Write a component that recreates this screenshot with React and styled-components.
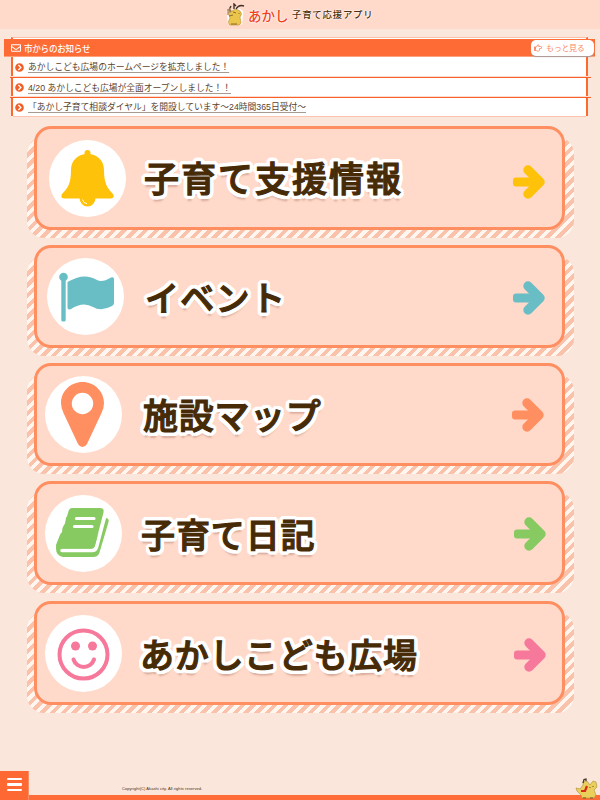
import styled, { createGlobalStyle } from "styled-components";
import { FaChevronCircleRight, FaRegEnvelope, FaRegHandPointRight } from "react-icons/fa";

const GlobalStyle = createGlobalStyle`
  * {
    box-sizing: border-box;
  }
  body {
    margin: 0;
    background: #fbe6dc;
    color: #4d2f0c;
    font-family: "Liberation Sans", "Noto Sans CJK JP", sans-serif;
  }
`;

const Page = styled.div`
  height: 800px;
  display: flex;
  flex-direction: column;
  overflow: hidden;
`;

const Header = styled.header`
  height: 29px;
  flex: none;
  padding-left: 226px;
  display: flex;
  align-items: center;
  background: #ffd9c9;
`;
const Logo = styled.h1`
  margin: 0 0 0 2px;
  display: flex;
  align-items: center;
  white-space: nowrap;
  font-family: "Noto Sans CJK JP", sans-serif;
  text-shadow: 0 0 2px #fff, 0 0 2px #fff, 0 0 1px #fff;
`;
const City = styled.span`
  width: 44px;
  color: #f0411c;
  font-size: 13.5px;
  font-weight: 500;
  line-height: 28px;
`;
const AppName = styled.span`
  font-size: 9.4px;
  font-weight: 500;
  letter-spacing: 0.8px;
  line-height: 29px;
`;

const News = styled.section`
  flex: none;
  margin: 8px 12px 0 11px;
  height: 79px;
  border-top: 1px solid #fcbda6;
  border-left: 2px solid #fb6a2c;
  border-right: 2px solid #fb6a2c;
  background: #fff;
`;
const NewsHead = styled.div`
  height: 18px;
  margin: 1px -9px 0;
  padding: 0 1px 0 7px;
  display: flex;
  align-items: center;
  background: #fe6b35;
  border-bottom: 1px solid #fda07c;
  color: #fff;
`;
const NewsTitle = styled.h2`
  margin: 0 auto 0 3px;
  font-family: "Noto Sans CJK JP", sans-serif;
  font-size: 8.6px;
  font-weight: 500;
  letter-spacing: -0.3px;
`;
const More = styled.a`
  width: 63px;
  height: 16px;
  padding-left: 3px;
  display: flex;
  align-items: center;
  gap: 4px;
  border-radius: 5px;
  background: #fff;
  box-shadow: 0 1px 1px #a99;
  color: #fb8a68;
  font-size: 8px;
  letter-spacing: -0.3px;
`;
const NewsList = styled.ul`
  margin: 0;
  padding: 0;
  list-style: none;
`;
const NewsItem = styled.li`
  height: 20px;
  margin: 0 -5px 0 -3px;
  padding: 0 5px 1px 5px;
  display: flex;
  align-items: center;
  gap: 4px;
  background: linear-gradient(#fddcd0 50%, #fb5f28 50%) bottom / 100% 2px no-repeat;
  &:first-child {
    height: 21px;
  }
  &:last-child {
    height: 19px;
    margin: 0;
    padding-left: 2px;
    background: linear-gradient(#fcc3b0, #fcc3b0) bottom / 100% 1px no-repeat;
  }
`;
const NewsLink = styled.a`
  font-size: 8.8px;
  line-height: 12px;
  letter-spacing: -0.03px;
  color: #59432f;
  white-space: nowrap;
  text-decoration: underline;
  text-decoration-color: #a79b91;
  text-underline-offset: 1.5px;
`;

const Menu = styled.nav`
  flex: 1;
  padding: 10px 26px 0 27px;
  display: flex;
  flex-direction: column;
`;
/* striped plate, its top edge sits 11px below the card's top */
const CardShade = styled.div`
  flex: none;
  display: flex;
  flex-direction: column;
  margin: 11px 0 ${(p) => p.$after}px;
  padding: 0 9px 8px 7px;
  background: repeating-linear-gradient(135deg, #fff6ef 0 3.6px, #fbc2ab 3.6px 7.6px);
  border-radius: 17px;
`;
const Card = styled.a`
  height: ${(p) => p.$height}px;
  margin-top: -11px;
  padding: 0 16px 0 ${(p) => p.$left}px;
  display: flex;
  align-items: center;
  border: 3px solid #ff8e60;
  border-radius: 17px;
  background: #ffd9c9;
`;
const Circle = styled.div`
  width: 77px;
  height: 77px;
  flex: none;
  border-radius: 50%;
  background: #fff;
  svg {
    display: block;
  }
`;
const CardLabel = styled.span`
  flex: 1;
  margin: ${(p) => p.$drop}px 0 0 ${(p) => p.$gap}px;
  font-family: "Noto Sans CJK JP", sans-serif;
  font-size: ${(p) => p.$size}px;
  font-weight: 500;
  line-height: 50px;
  white-space: nowrap;
  letter-spacing: ${(p) => p.$spacing}px;
  color: #472b07;
  -webkit-text-stroke: 1.2px #472b07;
  text-shadow: 4px 0 #fff, -4px 0 #fff, 0 4px #fff, 0 -4px #fff, 3px 3px #fff,
    -3px 3px #fff, 3px -3px #fff, -3px -3px #fff, 4px 2px #fff, -4px 2px #fff,
    4px -2px #fff, -4px -2px #fff, 2px 4px #fff, -2px 4px #fff, 2px -4px #fff,
    -2px -4px #fff, 2px 0 #fff, -2px 0 #fff, 0 2px #fff, 0 -2px #fff,
    0 5.5px 2px #d7aa9a;
`;
const ArrowSvg = styled.svg`
  flex: none;
  margin-top: ${(p) => p.$drop}px;
  margin-right: ${(p) => p.$right}px;
`;

const Footer = styled.footer`
  height: 29px;
  flex: none;
  display: flex;
  align-items: flex-end;
  background: linear-gradient(#ff6c37, #ff6c37) bottom / 100% 5px no-repeat;
`;
const MenuButton = styled.button`
  width: 29px;
  height: 29px;
  padding: 0 0 2px;
  border: 0;
  border-right: 1px solid #fd8d64;
  display: flex;
  flex-direction: column;
  align-items: center;
  justify-content: center;
  gap: 3px;
  background: #fe6832;
`;
const MenuLine = styled.span`
  width: 15px;
  height: 2.4px;
  border-radius: 1px;
  background: #fff;
`;
const Copyright = styled.small`
  margin: 0 auto 8px 93px;
  font-size: 4px;
  line-height: 6px;
  letter-spacing: 0.06px;
  white-space: nowrap;
`;

const Bell = () => (
  <svg width="77" height="77" viewBox="0 0 77 77" fill="#ffc20a">
    <rect x="35.5" y="10" width="6" height="9" rx="3" />
    <path d="M38.5 14C28 14 22 21 22 30C22 43 19 48 13 54Q11 58 15 58.5H62Q66 58 64 54C58 48 55 43 55 30C55 21 49 14 38.5 14Z" />
    <path d="M30.5 58a8 8.6 0 0 0 16 0Z" />
    <path d="M33.500 59.500a5 5 0 0 0 4.500 4.200" fill="none" stroke="#fff" strokeWidth=".9" />
  </svg>
);

const Flag = () => (
  <svg width="77" height="77" viewBox="0 0 77 77" fill="#69bec6">
    <circle cx="16.5" cy="19" r="4.3" />
    <rect x="14.3" y="18" width="4.4" height="45.5" rx="1.5" />
    <path d="M20.500 24Q37 14 50 22Q55 25 64 19.5Q67 18.500 67 21V45Q67 47 65 48Q54 54 46 49Q36 43 24 51Q20.500 52.500 20.500 49.500Z" />
  </svg>
);

const Pin = () => (
  <svg width="77" height="77" viewBox="0 0 77 77">
    <path
      d="M37.500 6C25.500 6 16 15.500 16 27Q16 32 18.500 37L33 68Q34.800 71 37.500 71T42 68L56.500 37Q59 32 59 27C59 15.500 49.500 6 37.500 6Z"
      fill="#ff8f60"
    />
    <circle cx="37.500" cy="27.500" r="10.700" fill="#fff" />
  </svg>
);

const Book = () => (
  <svg width="77" height="77" viewBox="0 0 77 77">
    <path
      d="M61 23Q64.500 23.500 63.500 27L54.500 57.500Q53 62 48 62H18Q11 61 11 53L14 45H50Z"
      fill="#87ca61"
    />
    <path d="M60 20L51.500 52Q50.500 55.500 47 55.500H17" fill="none" stroke="#fff" strokeWidth="3.600" strokeLinecap="round" />
    <path
      d="M27 13H55Q59.500 13 58.500 17.500L50 50Q49 53.500 45 53.500H17Q13.500 54 13 57Q11 55 11 50L14.500 41Q15.500 38.500 17 37L17.500 33Q19 29.500 20 28.500L21 23Q22.500 20.500 23 18Q24 13 27 13Z"
      fill="#87ca61"
    />
    <path d="M31.500 23.500H49M29.500 31.500H47" stroke="#fff" strokeWidth="3.200" strokeLinecap="round" />
  </svg>
);

const Smile = () => (
  <svg width="77" height="77" viewBox="0 0 77 77" fill="none" stroke="#f6799c" strokeWidth="4">
    <circle cx="38.500" cy="39.500" r="24" />
    <circle cx="30.500" cy="31" r="4.500" fill="#f6799c" stroke="none" />
    <circle cx="47.500" cy="31" r="4.500" fill="#f6799c" stroke="none" />
    <path d="M28.500 44.500A10.800 10.800 0 0 0 49 44.500" strokeLinecap="round" />
  </svg>
);

const Arrow = ({ color, drop, right }) => (
  <ArrowSvg $drop={drop} $right={right} width="32" height="34" fill={color} stroke={color}>
    <rect x="0" y="12.500" width="26" height="9" rx="3" stroke="none" />
    <path d="M16.500 6.500L27 17L16.500 27.500Z" stroke="none" />
    <path d="M15 5L27 17L15 29" fill="none" strokeWidth="9.400" strokeLinecap="round" strokeLinejoin="round" />
  </ArrowSvg>
);

const HeaderMascot = () => (
  <svg width="20" height="23" viewBox="0 0 20 23">
    <g stroke="#fff" strokeWidth="2.500" fill="#fff">
      <path d="M3 20L2 9L6 8Q11 4 16 9L15 20Z" />
    </g>
    <path d="M5 9Q9 4 14 8Q17 11 14 14L15 20L13 22H4Q1 20 4 15L2 9L5 7Z" fill="#ebc44a" stroke="#b88b35" strokeWidth=".6" />
    <path d="M5 3L3 7L5 8M8 6L8 1L10 3M10 6Q13 1 18 3" fill="none" stroke="#403127" strokeWidth="1.400" />
    <path d="M7 9L10 10M13 10V11M3 13L7 12M5 21L11 21" stroke="#795426" strokeWidth=".8" />
    <path d="M2 6V12M4 5V10" stroke="#b79067" strokeWidth="1.400" />
  </svg>
);

/* dog lying by the bottom bar, facing right */
const FooterMascot = () => (
  <svg width="26" height="22" viewBox="0 0 26 22">
    <path
      d="M2 10L6 11L9 7L9 4L13 3L16 7L19 3L22 4L23 9L20 12L22 17L20 20H8L7 17L3 13Z"
      fill="#ead05b"
      stroke="#b49843"
      strokeWidth=".7"
      strokeLinejoin="round"
    />
    <path d="M9 5L10 1.500L12 1V3" fill="none" stroke="#463b2c" strokeWidth="1.300" />
    <path d="M7 13L11 13L13 8" fill="none" stroke="#d92919" strokeWidth="2.200" />
    <path d="M16 9V10M19 8V9M9 20H12M16 20H19" stroke="#77502d" strokeWidth="1" />
  </svg>
);

const news = [
  "あかしこども広場のホームページを拡充しました！",
  "4/20 あかしこども広場が全面オープンしました！！",
  "「あかし子育て相談ダイヤル」を開設しています〜24時間365日受付〜",
];

const cards = [
  { label: "子育て支援情報", icon: <Bell />, color: "#ffc20a", height: 104, left: 12, gap: 18, size: 35, spacing: 2, after: 7, drop: -2, arrowDrop: 8, right: 1 },
  { label: "イベント", icon: <Flag />, color: "#69bec6", height: 103, left: 10, gap: 21, size: 34, spacing: 1.3, after: 7, drop: 1, arrowDrop: 3, right: 1 },
  { label: "施設マップ", icon: <Pin />, color: "#ff8f60", height: 103, left: 8, gap: 21, size: 35, spacing: 0.7, after: 7, drop: -2, arrowDrop: 1, right: 2 },
  { label: "子育て日記", icon: <Book />, color: "#87ca61", height: 104, left: 8, gap: 19, size: 34, spacing: 0.9, after: 8, drop: 1, arrowDrop: 2, right: 0 },
  { label: "あかしこども広場", icon: <Smile />, color: "#f6799c", height: 104, left: 8, gap: 18, size: 34, spacing: 0.7, after: 0, drop: 1, arrowDrop: 4, right: 0 },
];

const App = () => {
  return (
    <Page>
      <GlobalStyle />
      <Header>
        <HeaderMascot />
        <Logo>
          <City>あかし</City>
          <AppName>子育て応援アプリ</AppName>
        </Logo>
      </Header>

      <News>
        <NewsHead>
          <FaRegEnvelope size={10} />
          <NewsTitle>市からのお知らせ</NewsTitle>
          <More>
            <FaRegHandPointRight size={8} />
            もっと見る
          </More>
        </NewsHead>
        <NewsList>
          {news.map((text) => (
            <NewsItem key={text}>
              <FaChevronCircleRight size={9} color="#f2602a" />
              <NewsLink>{text}</NewsLink>
            </NewsItem>
          ))}
        </NewsList>
      </News>

      <Menu>
        {cards.map((card) => (
          <CardShade key={card.label} $after={card.after}>
            <Card $height={card.height} $left={card.left}>
              <Circle>{card.icon}</Circle>
              <CardLabel
                $gap={card.gap}
                $size={card.size}
                $spacing={card.spacing}
                $drop={card.drop}
              >
                {card.label}
              </CardLabel>
              <Arrow color={card.color} drop={card.arrowDrop} right={card.right} />
            </Card>
          </CardShade>
        ))}
      </Menu>

      <Footer>
        <MenuButton aria-label="メニュー">
          <MenuLine />
          <MenuLine />
          <MenuLine />
        </MenuButton>
        <Copyright>Copyright(C) Akashi city. All rights reserved.</Copyright>
        <FooterMascot />
      </Footer>
    </Page>
  );
};

export default App;
